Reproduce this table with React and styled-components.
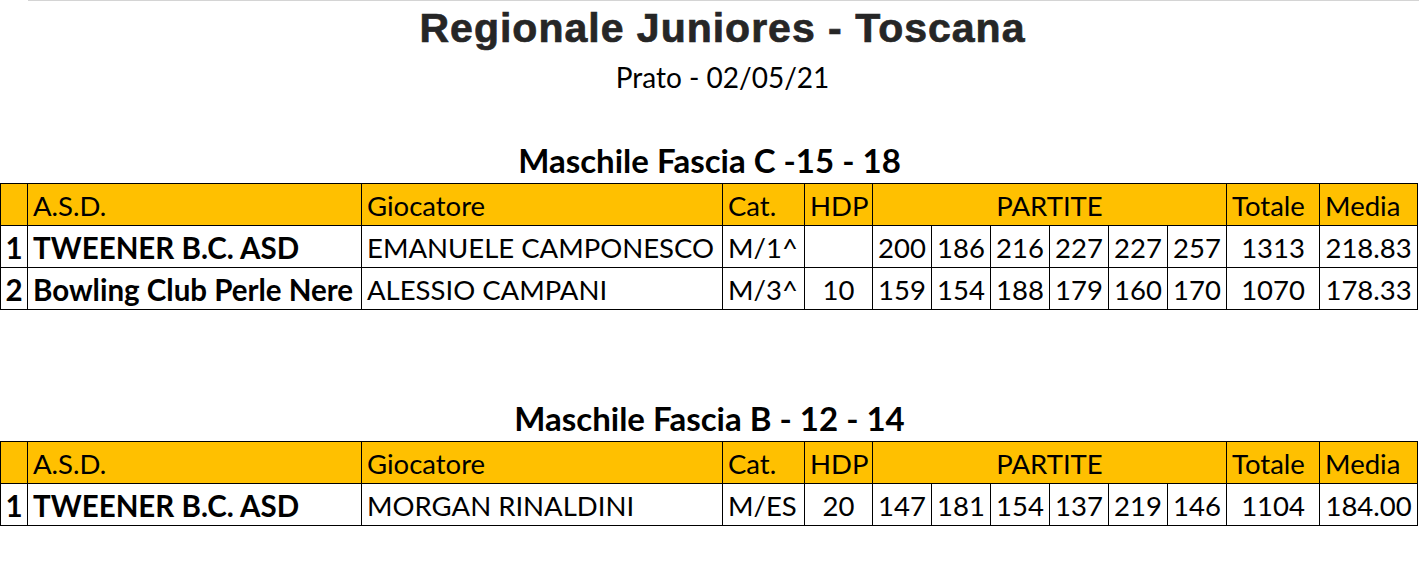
import React from 'react'
import styled, { createGlobalStyle } from 'styled-components';

const GlobalStyle = createGlobalStyle`
  body {
    margin: 0;
    background: #fff;
    font-family: Lato, "Noto Sans", sans-serif;
    color: #000;
  }
`;

const Page = styled.div`
  width: 1419px;
  display: flex;
  flex-direction: column;
`;

const TopLine = styled.div`
  height: 1px;
  margin-left: 28px;
  background: #d4d4d4;
`;

const Header = styled.header`
  display: flex;
  flex-direction: column;
  align-items: center;
  padding-left: 26px;
`;

const Title = styled.h1`
  margin: 4px 0 0;
  font-family: "Liberation Sans", Arial, sans-serif;
  font-weight: 700;
  font-size: 41px;
  line-height: 46px;
  letter-spacing: 1px;
  color: #262626;
  -webkit-text-stroke: 0.7px #262626;
`;

const Subtitle = styled.div`
  margin-top: 10px;
  font-size: 28px;
  line-height: 33px;
`;

const Section = styled.section`
  margin-top: ${p => p.$gap}px;
  display: flex;
  flex-direction: column;
`;

const SectionTitle = styled.h2`
  margin: 0 0 3px;
  height: 40px;
  font-size: 33px;
  font-weight: 700;
  line-height: 40px;
  text-align: center;
`;

const Table = styled.table`
  width: 1418px;
  table-layout: fixed;
  border-collapse: collapse;
  font-size: 27.5px;
  line-height: 31px;
`;

const Cell = styled.td`
  height: 31px;
  padding: 6px 0 4px ${p => (p.$align === 'center' ? 0 : 5)}px;
  border: 1px solid #000;
  text-align: ${p => p.$align || 'left'};
  font-size: ${p => (p.$bold ? '29.5px' : 'inherit')};
  font-weight: ${p => (p.$bold ? 700 : 400)};
  white-space: nowrap;
  overflow: hidden;
`;

const HeadCell = styled(Cell).attrs({ as: 'th' })`
  background: #ffc000;
  font-weight: 400;
`;

const cols = [27, 334, 361, 82, 68, 59, 59, 59, 59, 59, 59, 93, 98];

const sections = [
  {
    title: 'Maschile Fascia C -15 - 18',
    gap: 46,
    rows: [
      { pos: 1, club: 'TWEENER B.C. ASD', player: 'EMANUELE CAMPONESCO', cat: 'M/1^', hdp: '', games: [200, 186, 216, 227, 227, 257], total: 1313, avg: '218.83' },
      { pos: 2, club: 'Bowling Club Perle Nere', player: 'ALESSIO CAMPANI', cat: 'M/3^', hdp: '10', games: [159, 154, 188, 179, 160, 170], total: 1070, avg: '178.33' },
    ],
  },
  {
    title: 'Maschile Fascia B - 12 - 14',
    gap: 88,
    rows: [
      { pos: 1, club: 'TWEENER B.C. ASD', player: 'MORGAN RINALDINI', cat: 'M/ES', hdp: '20', games: [147, 181, 154, 137, 219, 146], total: 1104, avg: '184.00' },
    ],
  },
];

function Results({ rows }) {
  return (
    <Table>
      <colgroup>
        {cols.map((w, i) => <col key={i} style={{ width: w }} />)}
      </colgroup>
      <thead>
        <tr>
          <HeadCell />
          <HeadCell>A.S.D.</HeadCell>
          <HeadCell>Giocatore</HeadCell>
          <HeadCell>Cat.</HeadCell>
          <HeadCell>HDP</HeadCell>
          <HeadCell colSpan={6} $align="center">PARTITE</HeadCell>
          <HeadCell>Totale</HeadCell>
          <HeadCell>Media</HeadCell>
        </tr>
      </thead>
      <tbody>
        {rows.map(r => (
          <tr key={r.pos}>
            <Cell $align="center" $bold>{r.pos}</Cell>
            <Cell $bold>{r.club}</Cell>
            <Cell>{r.player}</Cell>
            <Cell>{r.cat}</Cell>
            <Cell $align="center">{r.hdp}</Cell>
            {r.games.map((g, i) => <Cell key={i} $align="center">{g}</Cell>)}
            <Cell $align="center">{r.total}</Cell>
            <Cell $align="center">{r.avg}</Cell>
          </tr>
        ))}
      </tbody>
    </Table>
  );
}

export default function App() {
  return (
    <>
      <GlobalStyle />
      <Page>
        <TopLine />
        <Header>
          <Title>Regionale Juniores - Toscana</Title>
          <Subtitle>Prato - 02/05/21</Subtitle>
        </Header>
        {sections.map(s => (
          <Section key={s.title} $gap={s.gap}>
            <SectionTitle>{s.title}</SectionTitle>
            <Results rows={s.rows} />
          </Section>
        ))}
      </Page>
    </>
  );
}
